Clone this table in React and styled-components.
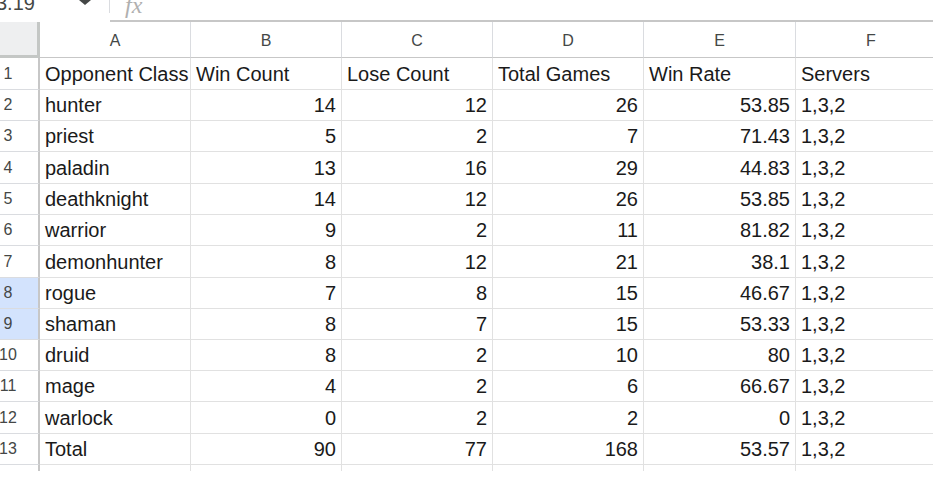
import React from "react";
import styled, { createGlobalStyle } from "styled-components";

const GlobalStyle = createGlobalStyle`
  html, body {
    margin: 0;
    padding: 0;
    background: #ffffff;
    overflow: hidden;
  }
  body {
    width: 933px;
    height: 478px;
    font-family: "Liberation Sans", Arial, sans-serif;
  }
`;

const Sheet = styled.div`
  width: 933px;
  height: 478px;
  overflow: hidden;
  background: #fff;
`;

const TopBar = styled.div`
  display: flex;
  height: 22px;
  overflow: hidden;
`;

const NameBox = styled.div`
  width: 109px;
  display: flex;
  align-items: flex-end;
  justify-content: space-between;
  padding-right: 18px;
  box-sizing: border-box;
  height: 15px;
  font-size: 20px;
  color: #444746;
  line-height: 20px;
`;

const NameText = styled.span`
  margin-left: -4px;
  margin-bottom: 2px;
`;

const Caret = styled.span`
  width: 0;
  height: 0;
  align-self: flex-start;
  border-left: 6px solid transparent;
  border-right: 6px solid transparent;
  border-top: 5px solid #444746;
`;

const Divider = styled.div`
  width: 1px;
  height: 13px;
  background: #dadce0;
`;

const FormulaArea = styled.div`
  flex: 1;
  display: flex;
  align-items: flex-start;
  padding-left: 15px;
  border-bottom: 2px solid #c7c7c7;
  height: 20px;
  box-sizing: content-box;
`;

const Fx = styled.span`
  font-family: "Liberation Serif", "Times New Roman", serif;
  font-style: italic;
  font-size: 24px;
  line-height: 24px;
  color: #b0b0b0;
  margin-top: -7px;
`;

const Row = styled.div`
  display: grid;
  grid-template-columns: 40px 151px 151px 151px 151px 152px 151px;
  height: ${(p) => p.$h}px;
`;

const Corner = styled.div`
  background: #eeeff0;
  border-right: 3px solid #c4c7c5;
  border-bottom: 3px solid #c4c7c5;
  box-sizing: border-box;
`;

const ColHead = styled.div`
  display: flex;
  align-items: center;
  justify-content: center;
  font-size: 16px;
  color: #444746;
  border-right: 1px solid #dadce0;
  border-bottom: 1px solid #c7c7c7;
  box-sizing: border-box;
  padding-top: 2px;
`;

const RowHead = styled.div`
  display: flex;
  align-items: center;
  font-size: 16px;
  color: #444746;
  background: ${(p) => (p.$selected ? "#d3e3fd" : "#ffffff")};
  border-right: 2px solid #c7c7c7;
  border-bottom: ${(p) => (p.$last ? "none" : "1px solid #dadce0")};
  box-sizing: border-box;
`;

const RowNum = styled.span`
  width: 14px;
  padding-left: 1px;
  display: flex;
  justify-content: center;
  white-space: nowrap;
`;

const Cell = styled.div`
  display: flex;
  align-items: flex-end;
  justify-content: ${(p) => (p.$num ? "flex-end" : "flex-start")};
  padding: 0 5px 5px 5px;
  font-size: 20px;
  line-height: 20px;
  color: #1a1a1a;
  white-space: nowrap;
  border-right: 1px solid #e1e1e1;
  border-bottom: ${(p) => (p.$last ? "none" : "1px solid #e1e1e1")};
  box-sizing: border-box;
`;

const columns = ["A", "B", "C", "D", "E", "F"];

const data = [
  ["hunter", 14, 12, 26, 53.85],
  ["priest", 5, 2, 7, 71.43],
  ["paladin", 13, 16, 29, 44.83],
  ["deathknight", 14, 12, 26, 53.85],
  ["warrior", 9, 2, 11, 81.82],
  ["demonhunter", 8, 12, 21, 38.1],
  ["rogue", 7, 8, 15, 46.67],
  ["shaman", 8, 7, 15, 53.33],
  ["druid", 8, 2, 10, 80],
  ["mage", 4, 2, 6, 66.67],
  ["warlock", 0, 2, 2, 0],
  ["Total", 90, 77, 168, 53.57],
];

const heights = [32, 31, 31, 32, 31, 31, 32, 31, 31, 31, 31, 32, 31];

function App() {
  return (
    <Sheet>
      <GlobalStyle />
      <TopBar>
        <NameBox>
          <NameText>3.19</NameText>
          <Caret />
        </NameBox>
        <Divider />
        <FormulaArea>
          <Fx>fx</Fx>
        </FormulaArea>
      </TopBar>

      <Row $h={36}>
        <Corner />
        {columns.map((c) => (
          <ColHead key={c}>{c}</ColHead>
        ))}
      </Row>

      <Row $h={heights[0]}>
        <RowHead>
          <RowNum>1</RowNum>
        </RowHead>
        <Cell>Opponent Class</Cell>
        <Cell>Win Count</Cell>
        <Cell>Lose Count</Cell>
        <Cell>Total Games</Cell>
        <Cell>Win Rate</Cell>
        <Cell>Servers</Cell>
      </Row>

      {data.map((r, i) => (
        <Row key={r[0]} $h={heights[i + 1]}>
          <RowHead $selected={i === 6 || i === 7}>
            <RowNum>{i + 2}</RowNum>
          </RowHead>
          <Cell>{r[0]}</Cell>
          <Cell $num>{r[1]}</Cell>
          <Cell $num>{r[2]}</Cell>
          <Cell $num>{r[3]}</Cell>
          <Cell $num>{r[4]}</Cell>
          <Cell>1,3,2</Cell>
        </Row>
      ))}

      <Row $h={6}>
        <RowHead $last />
        {columns.map((c) => (
          <Cell key={c} $last />
        ))}
      </Row>
    </Sheet>
  );
}

export default App;
